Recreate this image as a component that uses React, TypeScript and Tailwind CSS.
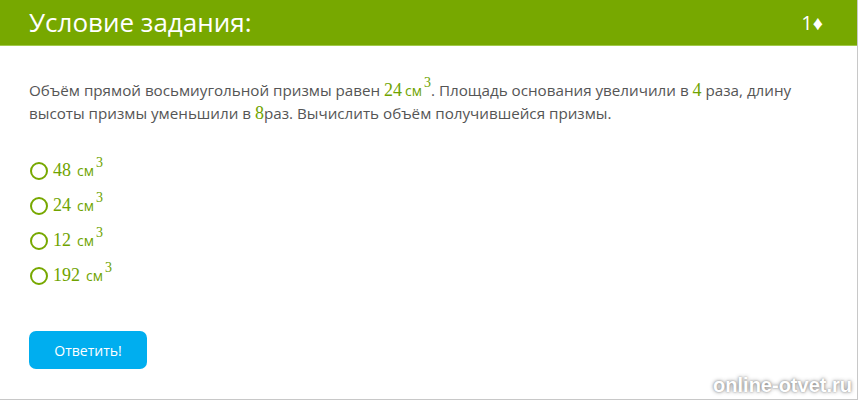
import React from "react";

function Num({ n }: { n: string }) {
  return <span className="text-[18px] text-[#6fa300] font-['Liberation_Serif','DejaVu_Serif',serif]">{n}</span>;
}

function Volume({ n, tight = false }: { n: string; tight?: boolean }) {
  return (
    <span className="text-[#6fa300] whitespace-nowrap">
      <Num n={n} />
      <span className={tight ? "text-[14px] ml-[3px]" : "text-[14px] ml-[6px]"}>см</span>
      <sup className="text-[14px] -top-[9px] ml-[2px] font-['Liberation_Serif','DejaVu_Serif',serif]">3</sup>
    </span>
  );
}

const options = ["48", "24", "12", "192"];

export default function App() {
  return (
    <div className="relative w-[858px] h-[400px] bg-white border-r border-b border-[#c8c8c8] overflow-hidden font-['Open_Sans','Noto_Sans',sans-serif]">
      <div className="h-[46px] bg-[#77a800] border-b border-[#a2c94a] flex items-center justify-between pl-[29px] pr-[34px]">
        <h1 className="text-white text-[26px] leading-none -mt-[1px]">Условие задания:</h1>
        <span className="text-white text-[20px] leading-none">1♦</span>
      </div>

      <div className="pl-[29px] pr-[20px]">
        <p className="mt-[33px] text-[15.2px] leading-[23px] text-[#555555]">
          Объём прямой восьмиугольной призмы равен <Volume n="24" tight />. Площадь основания увеличили в <Num n="4" />{" "}
          раза, длину высоты призмы уменьшили в <Num n="8" />
          раз. Вычислить объём получившейся призмы.
        </p>

        <div className="mt-[28px] flex flex-col">
          {options.map((o) => (
            <label key={o} className="h-[35px] flex items-center gap-[5px] cursor-pointer">
              <span className="w-[18px] h-[18px] rounded-full border-2 border-[#77a800] ml-[1px] shrink-0" />
              <Volume n={o} />
            </label>
          ))}
        </div>

        <button className="mt-[38px] w-[118px] h-[38px] rounded-[7px] bg-[#00aeef] text-white text-[14px]">
          Ответить!
        </button>
      </div>

      <div className="absolute right-[5px] bottom-[4px] text-white font-bold text-[20px] leading-none font-['Liberation_Sans',Arial,sans-serif] [text-shadow:0_0_4px_rgba(0,0,0,0.45),0_0_2px_rgba(0,0,0,0.3)]">
        online-otvet.ru
      </div>
    </div>
  );
}
